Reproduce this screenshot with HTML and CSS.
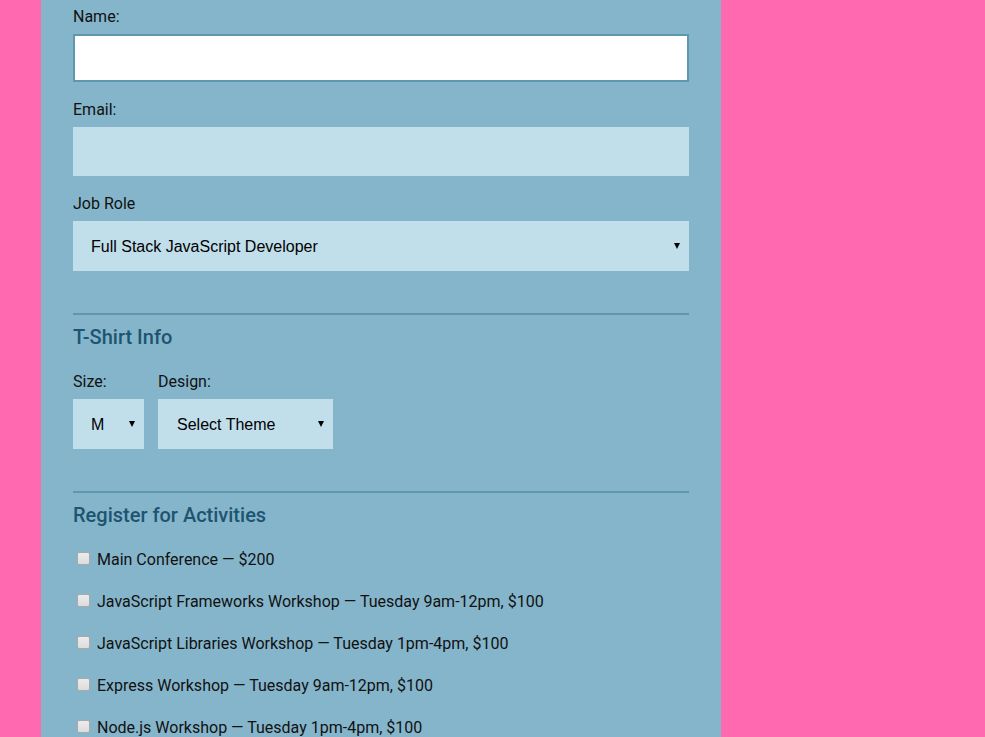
FILE: index.html
```html
<!DOCTYPE html>
<html>
<head>
<meta charset="utf-8">
<link rel="stylesheet" href="styles.css">
</head>
<body>
<div class="container">
  <form class="form">
    <section class="basic">
      <label class="field-label" for="name">Name:</label>
      <input class="text-input name-input" id="name" type="text">
      <label class="field-label" for="email">Email:</label>
      <input class="text-input email-input" id="email" type="email">
      <label class="field-label" for="title">Job Role</label>
      <div class="select-wrap wide">
        <select class="select" id="title"><option>Full Stack JavaScript Developer</option></select>
      </div>
    </section>
    <hr class="divider">
    <section class="shirt">
      <h2 class="section-title">T-Shirt Info</h2>
      <div class="shirt-row">
        <div class="shirt-col">
          <label class="field-label" for="size">Size:</label>
          <div class="select-wrap size">
            <select class="select" id="size"><option>M</option></select>
          </div>
        </div>
        <div class="shirt-col">
          <label class="field-label" for="design">Design:</label>
          <div class="select-wrap design">
            <select class="select" id="design"><option>Select Theme</option></select>
          </div>
        </div>
      </div>
    </section>
    <hr class="divider">
    <section class="activities">
      <h2 class="section-title act-title">Register for Activities</h2>
      <label class="activity"><input type="checkbox" class="check"><span>Main Conference — $200</span></label>
      <label class="activity"><input type="checkbox" class="check"><span>JavaScript Frameworks Workshop — Tuesday 9am-12pm, $100</span></label>
      <label class="activity"><input type="checkbox" class="check"><span>JavaScript Libraries Workshop — Tuesday 1pm-4pm, $100</span></label>
      <label class="activity"><input type="checkbox" class="check"><span>Express Workshop — Tuesday 9am-12pm, $100</span></label>
      <label class="activity"><input type="checkbox" class="check"><span>Node.js Workshop — Tuesday 1pm-4pm, $100</span></label>
    </section>
  </form>
</div>
</body>
</html>
```
FILE: styles.css
```css
html, body {
  margin: 0;
  padding: 0;
}
body {
  background: #ff69b0;
  font-family: Roboto, "Liberation Sans", sans-serif;
  font-size: 16px;
  color: #111;
  height: 737px;
  overflow: hidden;
}
.container {
  margin-left: 41px;
  width: 680px;
  box-sizing: border-box;
  padding: 7px 32px 40px;
  background: #85b5cb;
  min-height: 900px;
}
.form {
  display: flex;
  flex-direction: column;
}
.basic {
  display: flex;
  flex-direction: column;
}
.field-label {
  display: block;
  line-height: 19px;
  margin-bottom: 8px;
}
.text-input {
  display: block;
  box-sizing: border-box;
  width: 100%;
  height: 48px;
  margin: 0 0 18px;
  border: 2px solid #c1deeb;
  background: #c1deeb;
  outline: none;
  font-size: 16px;
}
.email-input {
  height: 49px;
  margin-bottom: 18px;
}
.name-input {
  background: #fff;
  border-color: #5e97b0;
}
.select-wrap {
  position: relative;
  height: 50px;
}
.select-wrap::after {
  content: "";
  position: absolute;
  right: 9px;
  top: 22px;
  border-left: 3.5px solid transparent;
  border-right: 3.5px solid transparent;
  border-top: 6px solid #000;
  pointer-events: none;
}
.select {
  appearance: none;
  -webkit-appearance: none;
  box-sizing: border-box;
  width: 100%;
  height: 50px;
  border: none;
  border-radius: 0;
  background: #c1deeb;
  color: #000;
  font-family: "Liberation Sans", Arial, sans-serif;
  font-size: 16px;
  padding: 0 20px 0 18px;
  outline: none;
}
.size { width: 71px; }
.design { width: 175px; }
.design .select { padding-left: 19px; }
.divider {
  border: none;
  height: 2px;
  background: #5e97b0;
  margin: 42px 0 10px;
  width: 100%;
}
.section-title {
  margin: 0 0 23px;
  font-size: 20px;
  font-weight: 500;
  line-height: 24px;
  color: #1e5470;
}
.shirt-row {
  display: flex;
  gap: 14px;
}
.shirt-col {
  display: flex;
  flex-direction: column;
}
.act-title {
  margin-bottom: 11px;
}
.activity {
  display: flex;
  align-items: center;
  height: 42px;
}
.check {
  appearance: none;
  -webkit-appearance: none;
  box-sizing: border-box;
  width: 13px;
  height: 13px;
  margin: 0 7px 0 4px;
  border: 1px solid #a9a9a9;
  border-radius: 2px;
  background: linear-gradient(#ececec, #dcdcdc);
  position: relative;
  top: -1px;
}
```
